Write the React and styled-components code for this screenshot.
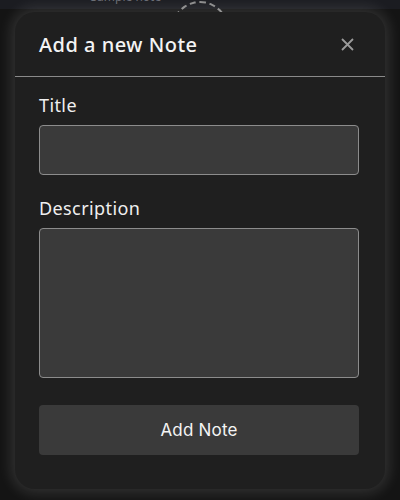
import React from "react";
import styled, { createGlobalStyle } from "styled-components";

const Global = createGlobalStyle`
  html, body { margin: 0; padding: 0; background: #131418; }
  body { font-family: "Noto Sans", "Open Sans", sans-serif; }
  * { box-sizing: border-box; }
`;

const Page = styled.div`
  width: 400px;
  height: 500px;
  position: relative;
  overflow: hidden;
  background: #141414;
`;

const BackBar = styled.div`
  height: 9px;
  background: #1b1c21;
  display: flex;
  align-items: flex-end;
  padding-left: 68px;
  gap: 18px;
  overflow: hidden;
`;

const BackText = styled.span`
  font-size: 12px;
  line-height: 12px;
  color: #6a6c75;
  transform: translateY(-6px);
`;

const DashedCircle = styled.div`
  position: absolute;
  left: 171px;
  top: 1px;
  width: 58px;
  height: 58px;
  border-radius: 50%;
  border: 2px dashed #8c8c8c;
`;

const Overlay = styled.div`
  position: absolute;
  inset: 0;
  display: flex;
  justify-content: center;
  padding-top: 12px;
`;

const Modal = styled.div`
  width: 370px;
  height: 477px;
  background: #1f1f1f;
  border-radius: 20px;
  box-shadow: 0 0 14px 4px rgba(255, 255, 255, 0.13);
  display: flex;
  flex-direction: column;
  color: #f2f2f2;
  position: relative;
  z-index: 1;
`;

const Header = styled.div`
  height: 65px;
  display: flex;
  align-items: center;
  justify-content: space-between;
  padding: 0 31px 0 24px;
  border-bottom: 1px solid #8a8a8a;
`;

const Heading = styled.h2`
  margin: 0;
  font-size: 20px;
  font-weight: 500;
  letter-spacing: 0.5px;
  color: #f4f4f4;
`;

const Close = styled.button`
  background: none;
  border: none;
  padding: 0;
  width: 14px;
  height: 14px;
  display: flex;
  align-items: center;
  justify-content: center;
  cursor: pointer;
`;

const Body = styled.form`
  display: flex;
  flex-direction: column;
  padding: 16px 26px 0 24px;
`;

const Field = styled.div`
  display: flex;
  flex-direction: column;
  gap: 8px;
  margin-bottom: ${(p) => p.$mb}px;
`;

const Label = styled.label`
  font-size: 18px;
  line-height: 24px;
  letter-spacing: 0.4px;
  color: #efefef;
`;

const Input = styled.input`
  height: 50px;
  width: 100%;
  background: #3a3a3a;
  border: 1px solid #8c8c8c;
  border-radius: 4px;
  color: #fff;
  outline: none;
`;

const TextArea = styled.textarea`
  display: block;
  height: 150px;
  width: 100%;
  background: #3a3a3a;
  border: 1px solid #8c8c8c;
  border-radius: 4px;
  color: #fff;
  resize: none;
  outline: none;
`;

const Submit = styled.button`
  height: 50px;
  width: 100%;
  background: #3a3a3a;
  border: none;
  border-radius: 4px;
  color: #f4f4f4;
  font-family: "Inter", "Noto Sans", sans-serif;
  font-size: 17px;
  letter-spacing: 0.2px;
  cursor: pointer;
`;

export default function App() {
  return (
    <Page>
      <Global />
      <BackBar>
        <BackText>•</BackText>
        <BackText>Sample note</BackText>
      </BackBar>
      <DashedCircle />
      <Overlay>
        <Modal>
          <Header>
            <Heading>Add a new Note</Heading>
            <Close aria-label="Close">
              <svg width="13" height="13" viewBox="0 0 13 13">
                <path d="M1 1L12 12M12 1L1 12" stroke="#9a9a9a" strokeWidth="1.8" />
              </svg>
            </Close>
          </Header>
          <Body onSubmit={(e) => e.preventDefault()}>
            <Field $mb={21}>
              <Label>Title</Label>
              <Input type="text" />
            </Field>
            <Field $mb={27}>
              <Label>Description</Label>
              <TextArea />
            </Field>
            <Submit type="submit">Add Note</Submit>
          </Body>
        </Modal>
      </Overlay>
    </Page>
  );
}
